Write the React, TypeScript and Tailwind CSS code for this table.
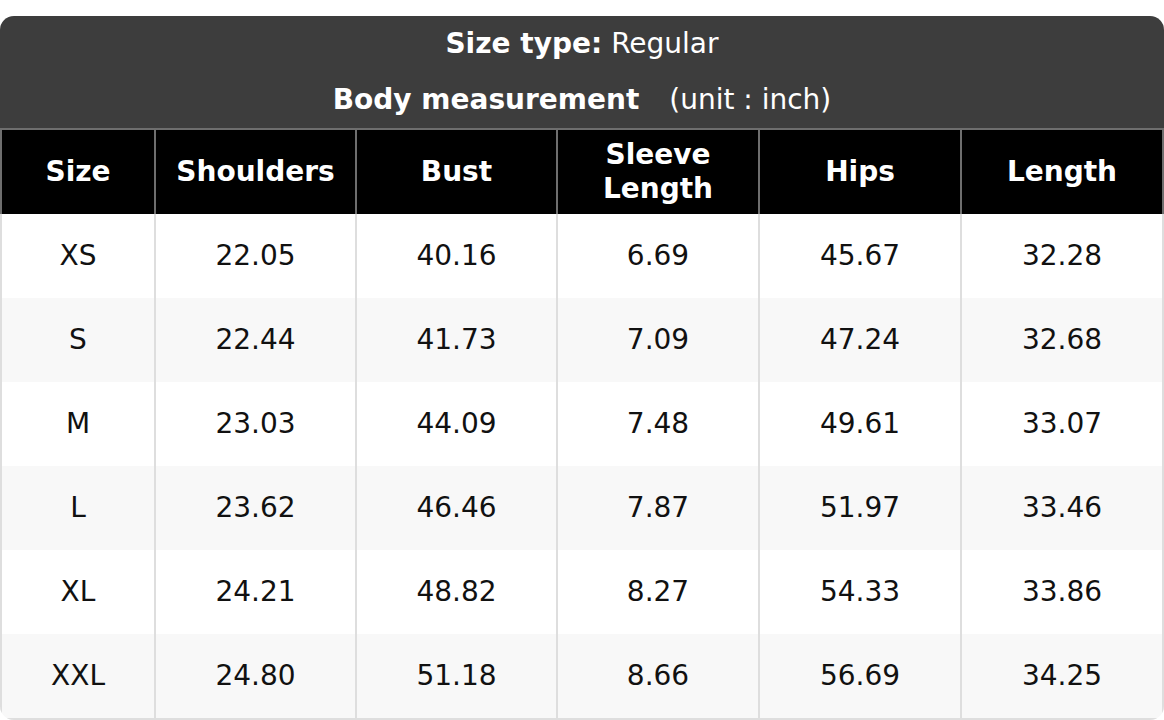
import React from "react"

const columns = ["Size", "Shoulders", "Bust", "Sleeve Length", "Hips", "Length"]

const rows: string[][] = [
  ["XS", "22.05", "40.16", "6.69", "45.67", "32.28"],
  ["S", "22.44", "41.73", "7.09", "47.24", "32.68"],
  ["M", "23.03", "44.09", "7.48", "49.61", "33.07"],
  ["L", "23.62", "46.46", "7.87", "51.97", "33.46"],
  ["XL", "24.21", "48.82", "8.27", "54.33", "33.86"],
  ["XXL", "24.80", "51.18", "8.66", "56.69", "34.25"],
]

export default function App() {
  return (
    <div className="w-[1164px] h-[720px] bg-white pt-4 font-['DejaVu_Sans',sans-serif] text-[28px]">
      <div className="rounded-t-[14px] rounded-b-[14px] overflow-hidden">
        <div className="bg-[#3d3d3d] text-white">
          <div className="h-[56px] flex items-center justify-center">
            <span className="font-bold">Size type:</span>
            <span className="ml-[9px]">Regular</span>
          </div>
          <div className="h-[56px] flex items-center justify-center">
            <span className="font-bold">Body measurement</span>
            <span className="ml-[30px]">(unit : inch)</span>
          </div>
        </div>

        <div className="grid grid-cols-[154px_201px_201px_202px_202px_204px]">
          {columns.map((col, i) => (
            <div
              key={col}
              className={
                "h-[86px] bg-black text-white font-bold leading-[1.2] flex items-center justify-center text-center border-t-2 border-l-2 border-[#6e6e6e] " +
                (i === columns.length - 1 ? "border-r-2" : "")
              }
            >
              {col === "Sleeve Length" ? (
                <span className="w-[140px]">Sleeve Length</span>
              ) : (
                col
              )}
            </div>
          ))}

          {rows.map((row, r) =>
            row.map((cell, c) => (
              <div
                key={r + "-" + c}
                className={
                  "h-[84px] flex items-center justify-center text-[#111] border-l-2 border-[#dedede] " +
                  (r % 2 === 1 ? "bg-[#f8f8f8] " : "bg-white ") +
                  (c === row.length - 1 ? "border-r-2 " : "") +
                  (r === rows.length - 1 ? "border-b-2 h-[86px] " : "")
                }
              >
                {cell}
              </div>
            ))
          )}
        </div>
      </div>
    </div>
  )
}
